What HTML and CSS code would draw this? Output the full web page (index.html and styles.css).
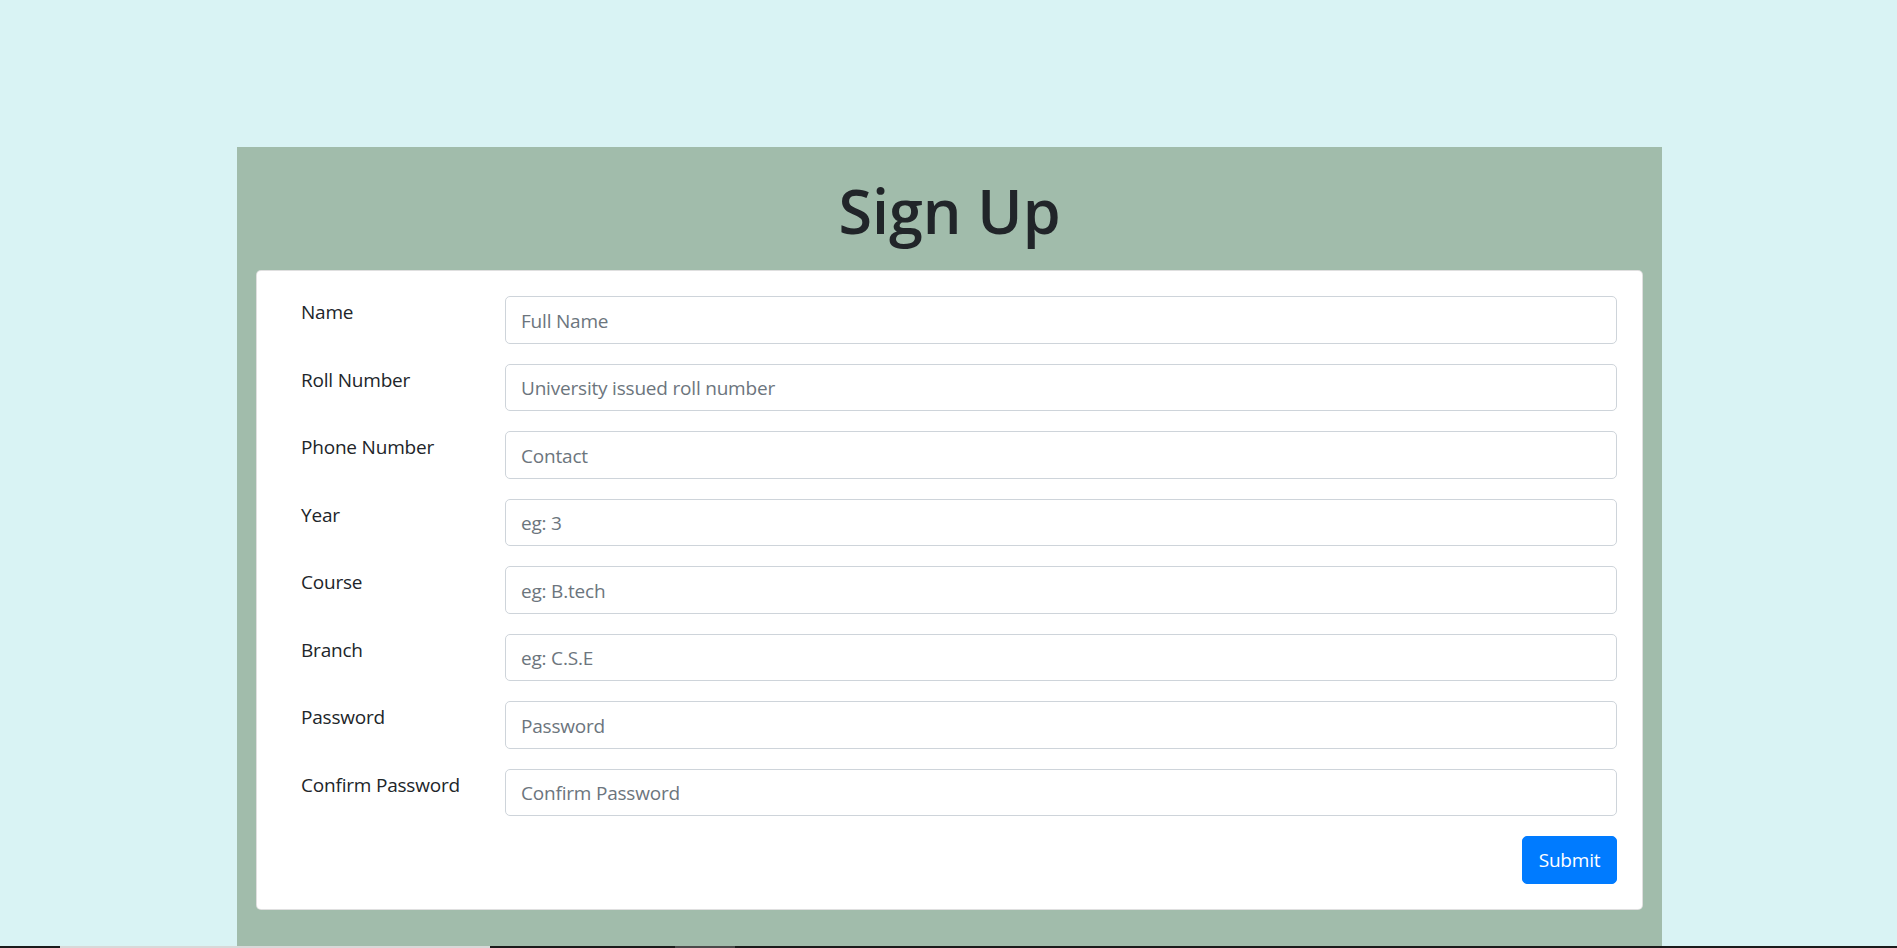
FILE: index.html
```html
<!DOCTYPE html>
<html lang="en">
<head>
<meta charset="utf-8">
<title>Sign Up</title>
<link rel="stylesheet" href="styles.css">
</head>
<body>
<main class="panel">
  <h1 class="title">Sign Up</h1>
  <div class="card">
    <form class="form">
      <label class="label" for="f-name">Name</label>
      <input class="field" id="f-name" type="text" placeholder="Full Name">
      <label class="label" for="f-roll">Roll Number</label>
      <input class="field" id="f-roll" type="text" placeholder="University issued roll number">
      <label class="label" for="f-phone">Phone Number</label>
      <input class="field" id="f-phone" type="text" placeholder="Contact">
      <label class="label" for="f-year">Year</label>
      <input class="field" id="f-year" type="text" placeholder="eg: 3">
      <label class="label" for="f-course">Course</label>
      <input class="field" id="f-course" type="text" placeholder="eg: B.tech">
      <label class="label" for="f-branch">Branch</label>
      <input class="field" id="f-branch" type="text" placeholder="eg: C.S.E">
      <label class="label" for="f-pass">Password</label>
      <input class="field" id="f-pass" type="password" placeholder="Password">
      <label class="label" for="f-cpass">Confirm Password</label>
      <input class="field" id="f-cpass" type="password" placeholder="Confirm Password">
      <div class="actions">
        <button class="btn" type="button">Submit</button>
      </div>
    </form>
  </div>
</main>
<div class="taskbar">
  <span class="tb tb-dark tb-a"></span>
  <span class="tb tb-light tb-b"></span>
  <span class="tb tb-dark tb-c"></span>
  <span class="tb tb-grey tb-d"></span>
  <span class="tb tb-dark tb-e"></span>
</div>
</body>
</html>
```

FILE: styles.css
```css
html, body {
  margin: 0;
  padding: 0;
}

body {
  background: #d9f3f4;
  font-family: "Open Sans", "Noto Sans", sans-serif;
  color: #212529;
  height: 948px;
  overflow: hidden;
}

.panel {
  width: 1425px;
  margin: 147px 0 0 237px;
  background: #a1bcab;
  padding: 0 19px 60px 19px;
  box-sizing: border-box;
}

.title {
  margin: 0;
  padding: 28px 0 23px;
  font-size: 61px;
  font-weight: 600;
  line-height: 72px;
  text-align: center;
  color: #212529;
}

.card {
  background: #fff;
  border: 1px solid rgba(0, 0, 0, 0.125);
  border-radius: 5px;
  padding: 25px;
}

.form {
  display: grid;
  grid-template-columns: 223px 1fr;
  row-gap: 20px;
  margin: 0;
}

.label {
  padding-left: 19px;
  font-size: 19px;
  line-height: 30px;
  margin-top: 1px;
  color: #212529;
  letter-spacing: -0.2px;
}

.field {
  height: 47.5px;
  box-sizing: border-box;
  border: 1px solid #ced4da;
  border-radius: 5px;
  padding: 8.5px 15px 6.5px;
  font-family: inherit;
  font-size: 19px;
  letter-spacing: -0.2px;
  color: #495057;
  background: #fff;
  outline: none;
}

.field::placeholder {
  color: #6c757d;
  opacity: 1;
}

.actions {
  grid-column: 1 / -1;
  display: flex;
  justify-content: flex-end;
}

.btn {
  height: 47.5px;
  width: 95px;
  padding: 0;
  border: 1px solid #007bff;
  border-radius: 5px;
  background: #007bff;
  color: #fff;
  font-family: inherit;
  font-size: 19px;
  letter-spacing: -0.2px;
}

.taskbar {
  position: fixed;
  left: 0;
  right: 0;
  bottom: 0;
  height: 2px;
  display: flex;
}

.tb { height: 2px; display: block; }
.tb-dark { background: #1b1b1b; }
.tb-light { background: #d8d8d8; }
.tb-grey { background: #4a4a4a; }
.tb-a { width: 60px; }
.tb-b { width: 430px; }
.tb-c { width: 185px; }
.tb-d { width: 60px; }
.tb-e { flex: 1; }
```
